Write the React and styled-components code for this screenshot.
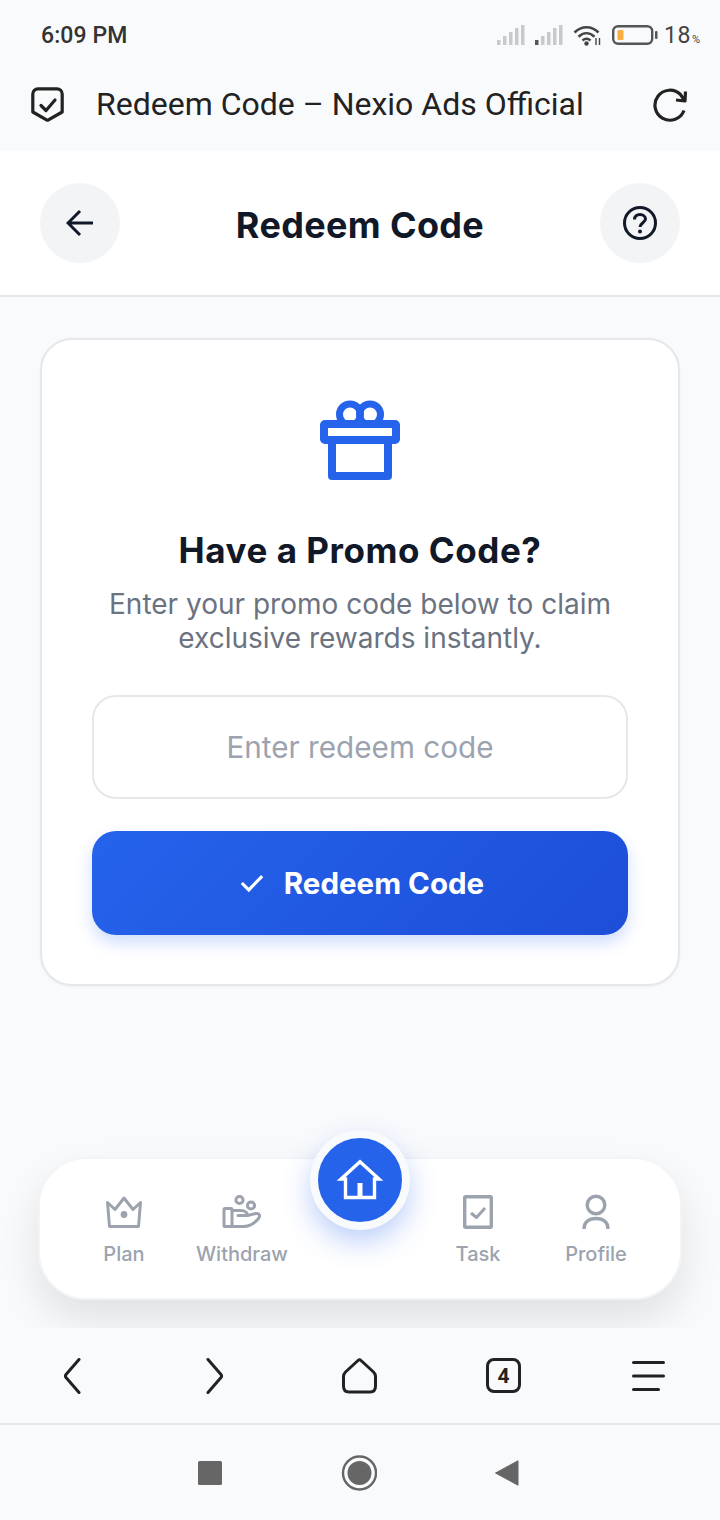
import React from "react";
import styled, { createGlobalStyle } from "styled-components";

const Global = createGlobalStyle`
  html, body { margin: 0; padding: 0; background: #f9fafc; }
  * { box-sizing: border-box; }
  input::placeholder { color: #9ca3af; opacity: 1; }
`;

const Page = styled.div`
  width: 720px;
  height: 1520px;
  display: flex;
  flex-direction: column;
  overflow: hidden;
  background: #f9fafc;
  font-family: Inter, "Liberation Sans", sans-serif;
`;

const StatusBar = styled.div`
  height: 70px;
  flex: none;
  display: flex;
  align-items: center;
  justify-content: space-between;
  padding: 0 20px 0 41px;
  color: #333;
  font-family: Roboto, sans-serif;
`;
const Clock = styled.span`
  font-size: 23px;
  font-weight: 500;
  letter-spacing: 0.1px;
`;
const StatusIcons = styled.div`
  display: flex;
  align-items: center;
`;
const BatteryText = styled.span`
  font-size: 23px;
  margin-left: 6px;
  letter-spacing: 0.5px;
  color: #444;
`;
const Percent = styled.span`
  font-size: 11px;
  letter-spacing: 0;
  margin-left: 1px;
`;

const BrowserBar = styled.div`
  height: 81px;
  flex: none;
  display: flex;
  align-items: center;
  padding: 0 33px 12px 31px;
`;
const BrowserTitle = styled.div`
  flex: 1;
  padding: 0 0 2px 32px;
  font-family: Roboto, sans-serif;
  font-size: 32px;
  color: #222;
  white-space: nowrap;
`;

const Header = styled.header`
  height: 146px;
  flex: none;
  background: #fff;
  border-bottom: 2px solid #e5e7eb;
  display: flex;
  align-items: center;
  justify-content: space-between;
  padding: 0 40px;
`;
const RoundButton = styled.button`
  width: 80px;
  height: 80px;
  border: 0;
  padding: 0;
  border-radius: 50%;
  background: #f3f4f6;
  display: flex;
  align-items: center;
  justify-content: center;
`;
const PageTitle = styled.h1`
  margin: 0;
  padding-top: 4px;
  font-size: 36px;
  font-weight: 700;
  letter-spacing: 0.35px;
  color: #111827;
`;

const Main = styled.main`
  flex: 1;
  min-height: 0;
  display: flex;
  flex-direction: column;
  justify-content: space-between;
  padding: 41px 38px 28px;
`;
const Card = styled.section`
  margin: 0 2px;
  height: 648px;
  background: #fff;
  border: 2px solid #e5e7eb;
  border-radius: 32px;
  padding: 60px 50px 0;
  display: flex;
  flex-direction: column;
  align-items: center;
  box-shadow: 0 1px 3px rgba(0, 0, 0, 0.04);
`;
const CardTitle = styled.h2`
  margin: 46px 0 0;
  font-size: 35px;
  line-height: 48px;
  font-weight: 700;
  letter-spacing: 0.55px;
  color: #111827;
`;
const CardText = styled.p`
  margin: 13px 0 0;
  font-size: 28px;
  line-height: 34px;
  color: #6b7280;
  text-align: center;
`;
const CodeInput = styled.input`
  width: 100%;
  height: 104px;
  flex: none;
  margin-top: 40px;
  border: 2px solid #e5e7eb;
  border-radius: 24px;
  background: #fff;
  outline: 0;
  text-align: center;
  font: 400 29.7px Inter, sans-serif;
`;
const RedeemButton = styled.button`
  width: 100%;
  height: 104px;
  flex: none;
  margin-top: 32px;
  border: 0;
  border-radius: 24px;
  padding: 0 0 0 4px;
  background: linear-gradient(135deg, #2563eb, #1d4ed8);
  color: #fff;
  display: flex;
  align-items: center;
  justify-content: center;
  gap: 20px;
  font: 700 29.5px Inter, sans-serif;
  box-shadow: 0 8px 16px rgba(37, 99, 235, 0.22);
`;

const BottomNav = styled.nav`
  position: relative;
  height: 143px;
  flex: none;
  background: #fff;
  border: 2px solid #f3f4f6;
  border-radius: 48px;
  padding: 0 25px;
  display: grid;
  grid-template-columns: repeat(5, 118px);
  box-shadow: 0 20px 40px rgba(0, 0, 0, 0.1);
`;
const NavItem = styled.div`
  display: flex;
  flex-direction: column;
  align-items: center;
  padding-top: 35px;
  color: #9ca3af;
  font-size: 20px;
  font-weight: 500;
`;
const NavIconBox = styled.div`
  height: 36px;
  display: flex;
  align-items: center;
  justify-content: center;
`;
const NavLabel = styled.span`
  margin-top: 12px;
  line-height: 24px;
`;
const HomeButton = styled.button`
  position: absolute;
  top: -29px;
  left: 270px;
  width: 100px;
  height: 100px;
  padding: 0;
  border: 8px solid #f9fafc;
  border-radius: 50%;
  background: #2563eb;
  display: flex;
  align-items: center;
  justify-content: center;
  box-shadow: 0 12px 28px rgba(37, 99, 235, 0.3);
`;

const BrowserNav = styled.div`
  height: 97px;
  flex: none;
  position: relative;
  z-index: 1;
  background: #f9fafc;
  border-bottom: 2px solid #e5e7eb;
  display: grid;
  grid-template-columns: 143px 144px 144px 145px 144px;
  justify-items: center;
  align-items: center;
`;
const TabCount = styled.div`
  width: 35px;
  height: 35px;
  border: 3px solid #222;
  border-radius: 8px;
  display: flex;
  align-items: center;
  justify-content: center;
  font: 700 21px Roboto, sans-serif;
  color: #222;
`;
const SystemNav = styled.div`
  height: 95px;
  flex: none;
  display: flex;
  align-items: center;
  padding-left: 198px;
  gap: 118px;
`;

const Signal = ({ dark }) => (
  <svg width="28" height="20" viewBox="0 0 28 20" style={{ marginRight: 10 }}>
    {[[0, 15, 5], [6, 11, 9], [12, 7, 13], [18, 3, 17], [24, 0, 20]].map(([x, y, h], i) => (
      <rect key={x} x={x} y={y} width="3.5" height={h} fill={dark && i === 0 ? "#555" : "#c8c9cb"} />
    ))}
  </svg>
);

const Wifi = () => (
  <svg width="29" height="21" viewBox="0 0 29 21" fill="none" style={{ marginRight: 10 }}>
    <path d="M1.5 7.5C8.5 .5 18.5 .5 25.5 7.5" stroke="#444" strokeWidth="2.6" />
    <path d="M5.5 11.8C10.5 7 16.5 7 21.5 11.8" stroke="#444" strokeWidth="2.6" />
    <path d="M9.5 15.5C12 13.3 15 13.3 17.5 15.5" stroke="#444" strokeWidth="2.6" />
    <circle cx="13.5" cy="18.5" r="2.2" fill="#444" />
    <path d="M23 13v7M26.5 13v7" stroke="#444" strokeWidth="1.4" />
  </svg>
);

const Battery = () => (
  <svg width="46" height="20" viewBox="0 0 46 20" fill="none">
    <rect x="1.2" y="1.2" width="39" height="17.6" rx="5" stroke="#555" strokeWidth="2.4" />
    <rect x="5.5" y="5" width="6" height="10" rx="1" fill="#f5b041" />
    <rect x="43" y="6" width="2.5" height="8" rx="1" fill="#555" />
  </svg>
);

const Gift = () => (
  <svg width="80" height="80" viewBox="0 0 80 80" fill="none" stroke="#2563eb" strokeWidth="8" strokeLinejoin="round">
    <circle cx="30" cy="14.5" r="10.5" strokeWidth="7" />
    <circle cx="50" cy="14.5" r="10.5" strokeWidth="7" />
    <rect x="4" y="24" width="72" height="16" rx="1" fill="#fff" />
    <path d="M12 40V76H68V40" />
  </svg>
);

const Crown = () => (
  <svg width="36" height="32" viewBox="0 0 36 32" fill="none" stroke="#9ca3af" strokeWidth="3" strokeLinejoin="round">
    <path d="M1.5 6.5L9 13.5L18 2L27 13.5L34.5 6.5L32.5 30.5H3.5Z" />
    <circle cx="18" cy="18.5" r="3.4" fill="#9ca3af" stroke="none" />
  </svg>
);

const HandCoins = () => (
  <svg width="40" height="34" viewBox="0 0 40 34" fill="none" stroke="#9ca3af" strokeWidth="3" strokeLinejoin="round" strokeLinecap="round">
    <circle cx="17.5" cy="5" r="3.6" />
    <circle cx="29" cy="10.5" r="3.6" />
    <rect x="2" y="13.5" width="8" height="18" rx="1" />
    <path d="M10 15.5H19C23 15.5 25.5 17.5 25.5 20.5H16" />
    <path d="M25.5 20.5L34 18.5C37.5 18 38.5 21 36.5 23.5C32.5 28.5 27 31.5 21.5 31.5H10" />
  </svg>
);

const TaskIcon = () => (
  <svg width="30" height="34" viewBox="0 0 30 34" fill="none" stroke="#9ca3af" strokeLinejoin="round">
    <rect x="1.7" y="1.7" width="26.6" height="30.6" rx="1" strokeWidth="3.4" />
    <path d="M8 18L13.5 22.5L22 13" strokeWidth="3" />
  </svg>
);

const ProfileIcon = () => (
  <svg width="28" height="36" viewBox="0 0 28 36" fill="none" stroke="#9ca3af" strokeWidth="3.4">
    <circle cx="14" cy="11" r="8.8" />
    <path d="M2 35C2 28 7 24.5 14 24.5S26 28 26 35" />
  </svg>
);

const HomeIcon = () => (
  <svg width="48" height="42" viewBox="0 0 48 42" fill="none" stroke="#fff" strokeWidth="3.4" strokeLinejoin="miter">
    <path d="M24 2.7L5 20H9.5V38.5H38.5V20H43Z" />
    <path d="M24 24V38.5" strokeWidth="5" />
  </svg>
);

export default function App() {
  return (
    <Page>
      <Global />
      <StatusBar>
        <Clock>6:09 PM</Clock>
        <StatusIcons>
          <Signal />
          <Signal dark />
          <Wifi />
          <Battery />
          <BatteryText>18<Percent>%</Percent></BatteryText>
        </StatusIcons>
      </StatusBar>

      <BrowserBar>
        <svg width="33" height="35" viewBox="0 0 33 35" fill="none" stroke="#222" strokeWidth="3.2" strokeLinejoin="round" strokeLinecap="round">
          <path d="M7 1.8H26C29 1.8 31.2 4 31.2 7V25L17 33.2H16L1.8 25V7C1.8 4 4 1.8 7 1.8Z" />
          <path d="M10 18.5L15 23.5L24 13" />
        </svg>
        <BrowserTitle>Redeem Code – Nexio Ads Official</BrowserTitle>
        <svg width="34" height="34" viewBox="0 0 34 34" fill="none" stroke="#222" strokeWidth="3.2">
          <path d="M31 22.5A15 15 0 1 1 27.5 6.5L32 13" />
          <path d="M32.5 3.5L32 13L23 12" strokeLinejoin="round" />
        </svg>
      </BrowserBar>

      <Header>
        <RoundButton aria-label="Back">
          <svg width="28" height="28" viewBox="0 0 28 28" fill="none" stroke="#111827" strokeWidth="3">
            <path d="M27 14H3M14 2L2 14L14 26" />
          </svg>
        </RoundButton>
        <PageTitle>Redeem Code</PageTitle>
        <RoundButton aria-label="Help">
          <svg width="34" height="34" viewBox="0 0 34 34" fill="none" stroke="#111827" strokeWidth="3">
            <circle cx="17" cy="17" r="15.5" />
            <path d="M11.5 13.5C11.5 10.2 14 8.5 17 8.5C20 8.5 22.5 10.5 22.5 13C22.5 16.5 17 17 17 21" strokeWidth="3" />
            <circle cx="17" cy="25.5" r="2" fill="#111827" stroke="none" />
          </svg>
        </RoundButton>
      </Header>

      <Main>
        <Card>
          <Gift />
          <CardTitle>Have a Promo Code?</CardTitle>
          <CardText>
            Enter your promo code below to claim
            <br />
            exclusive rewards instantly.
          </CardText>
          <CodeInput placeholder="Enter redeem code" />
          <RedeemButton>
            <svg width="24" height="20" viewBox="0 0 26 20" fill="none" stroke="#fff" strokeWidth="3.4">
              <path d="M2 10L9.5 17.5L24 2.5" />
            </svg>
            Redeem Code
          </RedeemButton>
        </Card>

        <BottomNav>
          <NavItem>
            <NavIconBox><Crown /></NavIconBox>
            <NavLabel>Plan</NavLabel>
          </NavItem>
          <NavItem>
            <NavIconBox><HandCoins /></NavIconBox>
            <NavLabel>Withdraw</NavLabel>
          </NavItem>
          <div />
          <NavItem>
            <NavIconBox><TaskIcon /></NavIconBox>
            <NavLabel>Task</NavLabel>
          </NavItem>
          <NavItem>
            <NavIconBox><ProfileIcon /></NavIconBox>
            <NavLabel>Profile</NavLabel>
          </NavItem>
          <HomeButton aria-label="Home"><HomeIcon /></HomeButton>
        </BottomNav>
      </Main>

      <BrowserNav>
        <svg width="18" height="36" viewBox="0 0 18 36" fill="none" stroke="#222" strokeWidth="3" strokeLinecap="round" strokeLinejoin="round">
          <path d="M16 1.5L3 16.5C2 17.8 2 18.2 3 19.5L16 34.5" />
        </svg>
        <svg width="18" height="36" viewBox="0 0 18 36" fill="none" stroke="#222" strokeWidth="3" strokeLinecap="round" strokeLinejoin="round">
          <path d="M2 1.5L15 16.5C16 17.8 16 18.2 15 19.5L2 34.5" />
        </svg>
        <svg width="35" height="36" viewBox="0 0 35 36" fill="none" stroke="#222" strokeWidth="3" strokeLinejoin="round">
          <path d="M16 2.5C17 1.5 18 1.5 19 2.5L31.5 14C33 15.5 33.5 16.5 33.5 18.5V28C33.5 32 31.5 34 28 34H7C3.5 34 1.5 32 1.5 28V18.5C1.5 16.5 2 15.5 3.5 14Z" />
        </svg>
        <TabCount>4</TabCount>
        <svg width="33" height="32" viewBox="0 0 33 32" fill="none" stroke="#222" strokeWidth="3" strokeLinecap="round">
          <path d="M1.5 2.5H31.5M1.5 16H31.5M1.5 29.5H26.5" />
        </svg>
      </BrowserNav>

      <SystemNav>
        <svg width="24" height="24" viewBox="0 0 24 24"><rect width="24" height="24" rx="1.5" fill="#666" /></svg>
        <svg width="37" height="36" viewBox="0 0 37 36" fill="none">
          <circle cx="19.5" cy="18" r="16.5" stroke="#666" strokeWidth="2.4" />
          <circle cx="19.5" cy="18" r="12" fill="#666" />
        </svg>
        <svg width="24" height="26" viewBox="0 0 24 26"><path d="M23 0.8V25.2L0.5 13Z" fill="#666" stroke="#666" strokeLinejoin="round" /></svg>
      </SystemNav>
    </Page>
  );
}
